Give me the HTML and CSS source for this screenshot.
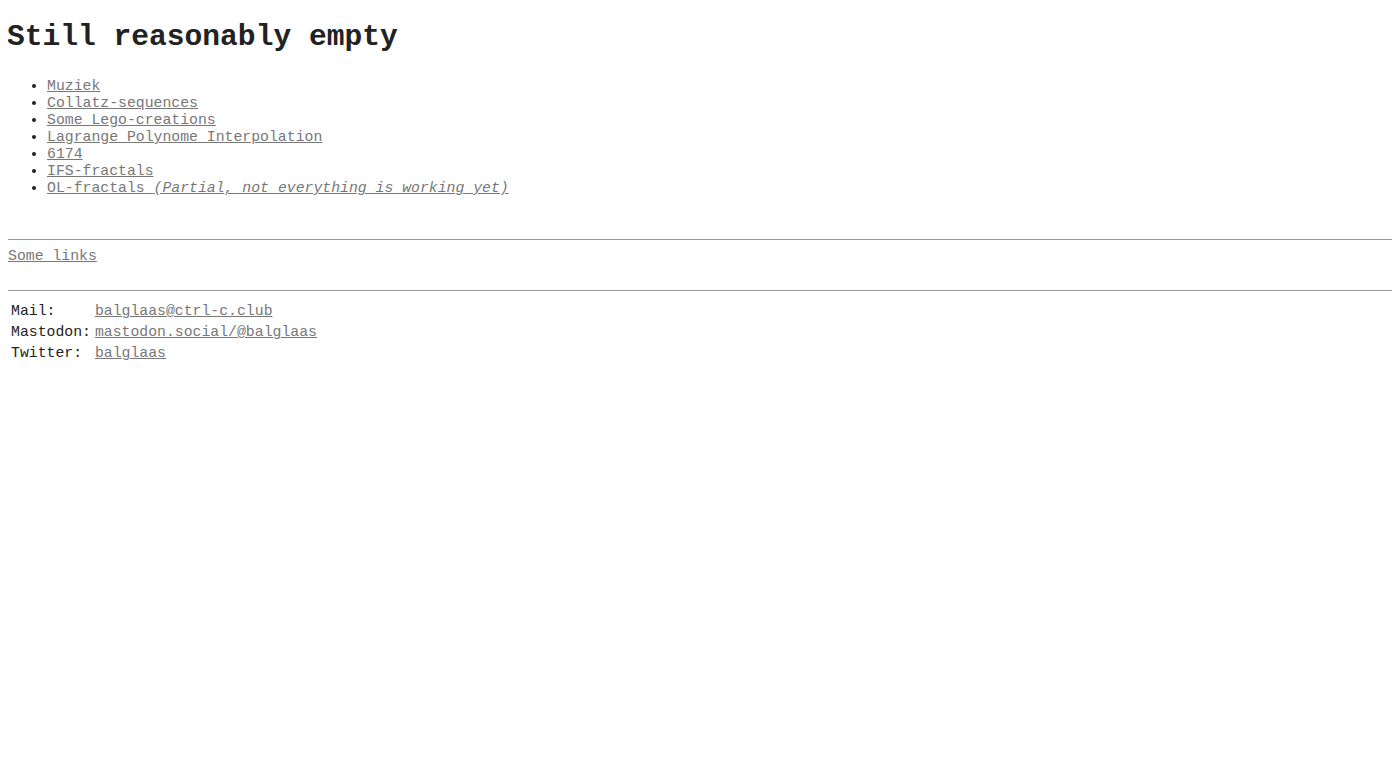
FILE: index.html
```html
<!DOCTYPE html>
<html>
<head>
    <title>Still reasonably empty</title>
    <link rel="stylesheet" href="styles.css">
</head>
<body>
    <h1>Still reasonably empty</h1>

    <ul class="pages">
        <li><a href="#">Muziek</a></li>
        <li><a href="#">Collatz-sequences</a></li>
        <li><a href="#">Some Lego-creations</a></li>
        <li><a href="#">Lagrange Polynome Interpolation</a></li>
        <li><a href="#">6174</a></li>
        <li><a href="#">IFS-fractals</a></li>
        <li><a href="#">OL-fractals <i>(Partial, not everything is working yet)</i></a></li>
    </ul>

    <hr>
    <a href="#">Some links</a>
    <br><br>
    <hr>

    <table class="contact">
        <tr><td>Mail:</td><td><a href="#">balglaas@ctrl-c.club</a></td></tr>
        <tr><td>Mastodon:</td><td><a href="#">mastodon.social/@balglaas</a></td></tr>
        <tr><td>Twitter:</td><td><a href="#">balglaas</a></td></tr>
    </table>
</body>
</html>
```

FILE: styles.css
```css
body {
    margin: 8px;
    background: #ffffff;
    color: #222222;
    font-family: "Liberation Mono", "DejaVu Sans Mono", monospace;
    font-size: 14.8px;
    line-height: 17px;
}

h1 {
    font-size: 2em;
    line-height: 34px;
    margin: 12px 0 24px -1px;
}

a {
    color: #777777;
}

.pages {
    margin: 24px 0 0 0;
    padding-left: 39px;
}

hr {
    border: none;
    border-top: 1px solid #999999;
    height: 0;
    margin: 8px 0;
}

.pages + hr {
    margin-top: 42px;
}

.contact {
    font-size: 14.8px;
    border-spacing: 2px;
    margin-top: 9px;
}

.contact td {
    padding: 1px;
    line-height: 17px;
}
```
